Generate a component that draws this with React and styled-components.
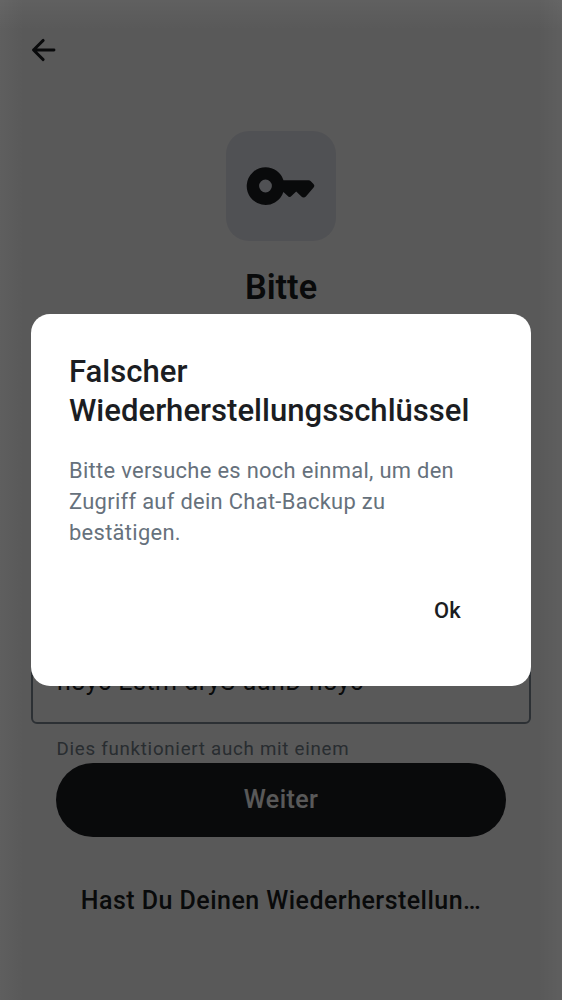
import React from 'react';
import styled, { createGlobalStyle } from 'styled-components';

const GlobalStyle = createGlobalStyle`
  * { box-sizing: border-box; }
  body { margin: 0; background: #595959; font-family: Roboto, sans-serif; }
  button { font: inherit; border: 0; background: none; padding: 0; color: inherit; }
`;

const Screen = styled.div`
  position: relative;
  width: 562px;
  height: 1000px;
  overflow: hidden;
  background: #fff;
  color: #1b1d22;
`;

const Page = styled.main`
  height: 100%;
  display: flex;
  flex-direction: column;
  align-items: center;
`;

const TopBar = styled.header`
  width: 100%;
  height: 100px;
  padding: 34px 0 0 28px;
`;

const BackButton = styled.button`
  display: block;
  width: 32px;
  height: 32px;
  svg { display: block; }
`;

const KeyTile = styled.div`
  width: 110px;
  height: 109.5px;
  margin-top: 31px;
  border-radius: 23px;
  background: #e6e8f0;
  display: flex;
  align-items: center;
  justify-content: center;
  svg { display: block; }
`;

const Heading = styled.h1`
  margin: 24.5px 0 0;
  font-size: 34.3px;
  line-height: 44px;
  font-weight: 600;
`;

const KeyField = styled.div`
  width: 500px;
  height: 110.5px;
  margin-top: 304px;
  padding: 52px 24px 0;
  border: 2px solid #7f8995;
  border-radius: 6px;
  font-size: 25px;
  line-height: 30px;
  letter-spacing: 0.5px;
  white-space: nowrap;
`;

const Hint = styled.p`
  width: 450px;
  margin: 14.5px 0 2.5px;
  padding-left: 0.5px;
  font-size: 18.7px;
  line-height: 22px;
  letter-spacing: 0.74px;
  color: #74808b;
`;

const PrimaryButton = styled.button`
  && {
    width: 450px;
    height: 74.5px;
    border-radius: 38px;
    background: #1b1d22;
    color: #fff;
    font-size: 25px;
    font-weight: 500;
    letter-spacing: 0.4px;
  }
`;

const LinkButton = styled.button`
  && {
    width: 450px;
    height: 40px;
    margin-top: 43px;
    font-size: 25px;
    font-weight: 500;
    letter-spacing: 0.46px;
    white-space: nowrap;
  }
`;

const Scrim = styled.div`
  position: absolute;
  inset: 0;
  display: flex;
  align-items: center;
  justify-content: center;
  background: rgba(0, 0, 0, 0.65);
  &::before {
    content: '';
    position: absolute;
    inset: 0;
    background:
      linear-gradient(to right, rgba(255, 255, 255, 0.035), transparent 24px, transparent 538px, rgba(255, 255, 255, 0.035)),
      linear-gradient(to bottom, rgba(255, 255, 255, 0.045), transparent 30px);
  }
`;

const Dialog = styled.section`
  position: relative;
  width: 500px;
  height: 372px;
  padding: 38px 38px 0;
  border-radius: 19px;
  background: #fff;
  display: flex;
  flex-direction: column;
`;

const DialogTitle = styled.h2`
  margin: 0;
  font-size: 31.1px;
  line-height: 39px;
  font-weight: 500;
`;

const DialogText = styled.p`
  margin: 25px 0 0;
  font-size: 21.9px;
  line-height: 31.2px;
  letter-spacing: 0.31px;
  color: #66717c;
`;

const DialogAction = styled.button`
  && {
    align-self: flex-end;
    margin: 46px 32px 0 0;
    font-size: 21.9px;
    line-height: 32px;
    font-weight: 500;
    letter-spacing: 0.3px;
  }
`;

export default function App() {
  return (
    <Screen>
      <GlobalStyle />
      <Page>
        <TopBar>
          <BackButton aria-label="Zurück">
            <svg width="32" height="32" viewBox="0 0 32 32" fill="none" stroke="currentColor" strokeWidth="2.9" strokeLinecap="round" strokeLinejoin="round">
              <path d="M26 16H5.5M15.2 6.4L5.5 16l9.7 9.6" />
            </svg>
          </BackButton>
        </TopBar>
        <KeyTile>
          <svg width="70" height="40" viewBox="0 0 70 40" fill="currentColor">
            <path fillRule="evenodd" d="M19.5 1.3a18.8 18.8 0 0 1 18 13H62.7a3 3 0 0 1 2.1.9L67.5 17.9a2.6 2.6 0 0 1 .1 3.5L59.9 30.5a3 3 0 0 1-4.5.1L50.2 25.5l-4.5 4.3a2.8 2.8 0 0 1-4.2 0L37.4 25.9A18.8 18.8 0 1 1 19.5 1.3ZM19.5 13.6a6.4 6.4 0 1 0 0 12.8 6.4 6.4 0 0 0 0-12.8Z" />
          </svg>
        </KeyTile>
        <Heading>Bitte</Heading>
        <KeyField>n8yc Estm dryS uunD n8yc</KeyField>
        <Hint>Dies funktioniert auch mit einem</Hint>
        <PrimaryButton>Weiter</PrimaryButton>
        <LinkButton>Hast Du Deinen Wiederherstellun…</LinkButton>
      </Page>
      <Scrim>
        <Dialog role="dialog">
          <DialogTitle>Falscher Wiederherstellungsschlüssel</DialogTitle>
          <DialogText>Bitte versuche es noch einmal, um den Zugriff auf dein Chat-Backup zu bestätigen.</DialogText>
          <DialogAction>Ok</DialogAction>
        </Dialog>
      </Scrim>
    </Screen>
  );
}
